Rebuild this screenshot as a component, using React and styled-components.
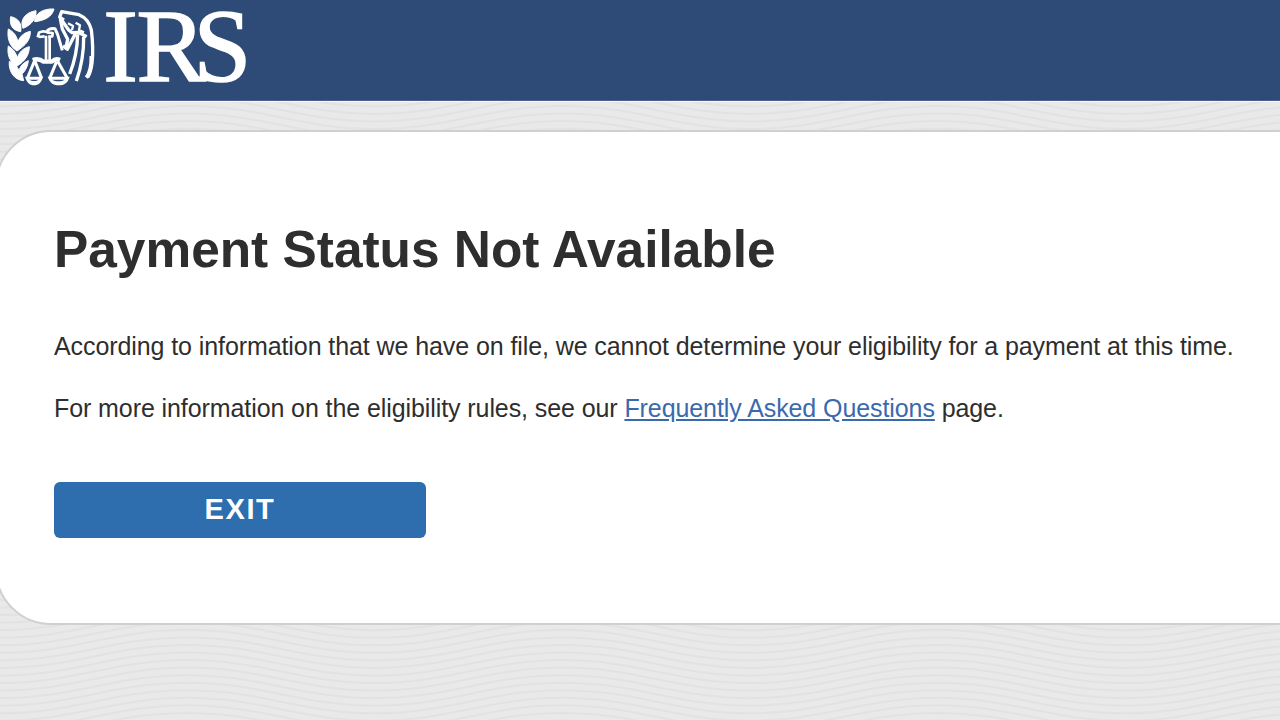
import React from "react";
import styled, { createGlobalStyle } from "styled-components";

const GlobalStyle = createGlobalStyle`
  *, *::before, *::after { box-sizing: border-box; }
  html, body { margin: 0; overflow: hidden; }
  body { font-family: "Liberation Sans", Arial, sans-serif; color: #2e2e2e; }
`;

const Page = styled.div`
  position: relative;
  display: flex;
  flex-direction: column;
  height: 720px;
  background: #e9e9e9;
  overflow: hidden;
`;

const WaveBackdrop = styled.svg`
  position: absolute;
  inset: 0;
  width: 100%;
  height: 100%;
`;

const Header = styled.header`
  position: relative;
  flex: none;
  height: 102px;
  background: #2d4b76;
  border-bottom: 1px solid #f8f8fa;
  box-shadow: inset 0 -1px 0 #4a5f8e;
`;

const Logo = styled.svg`
  display: block;
  width: 260px;
  height: 100px;
  overflow: visible;
`;

const Card = styled.main`
  position: relative;
  flex: none;
  height: 495px;
  margin: 28px -60px 0 -5px;
  padding: 87px 58px 0 57px;
  background: #fff;
  border: 2px solid #d0d0d0;
  border-radius: 56px;
`;

const Title = styled.h1`
  margin: 0;
  font-size: 51.4px;
  line-height: 60px;
  white-space: nowrap;
`;

const Copy = styled.p`
  margin: ${(p) => p.$top}px 0 0;
  font-size: 25px;
  line-height: 30px;
  letter-spacing: -0.088px;
  white-space: nowrap;
`;

const FaqLink = styled.a`
  color: #3a6aae;
  text-decoration: underline;
`;

const ExitButton = styled.button`
  display: block;
  width: 372px;
  height: 56px;
  margin: 59px 0 0;
  padding: 0 0 2px;
  border: 0;
  border-radius: 6px;
  background: #2e6dae;
  color: #fff;
  font: bold 29px/1 "Liberation Sans", Arial, sans-serif;
  letter-spacing: 1.6px;
`;

const WAVE_PERIOD = 375;
const WAVE_GAP = 7.55;

function wavePath(crest) {
  const low = crest + 23;
  const half = WAVE_PERIOD / 2;
  let d = `M0 ${low}`;
  for (let x = 0; x < 1280; x += WAVE_PERIOD) {
    d += `C${x + 75} ${low} ${x + half - 75} ${crest} ${x + half} ${crest}`;
    d += `S${x + WAVE_PERIOD - 75} ${low} ${x + WAVE_PERIOD} ${low}`;
  }
  return d;
}

const crestsFrom = (start, count) => Array.from({ length: count }, (_, i) => start + i * WAVE_GAP);

function Waves() {
  const crests = [...crestsFrom(75.8, 16), ...crestsFrom(561.9, 22)];
  return (
    <WaveBackdrop aria-hidden="true" fill="none" stroke="#e2e2e2" strokeWidth="2">
      {crests.map((y) => (
        <path key={y} d={wavePath(y)} />
      ))}
    </WaveBackdrop>
  );
}

function Emblem() {
  return (
    <g transform="scale(.33333)" fill="#fff">
      <g stroke="#fff" strokeWidth="3" strokeLinejoin="round">
        <path d="M104 65C104 40 130 25 162 27C157 49 135 62 104 65Z" />
        <path d="M69 85C58 61 76 37 108 32C110 54 95 75 69 85Z" />
        <path d="M62 95C36 91 28 74 32 50C55 54 67 72 62 95Z" />
        <path d="M51 153C27 138 21 112 25 87C43 97 50 108 54 126C59 110 70 99 91 94C92 119 77 136 51 153Z" />
        <path d="M50 199C27 184 21 162 25 138C39 146 47 157 52 173C58 156 69 145 88 140C88 166 74 184 50 199Z" />
        <path d="M71 242C42 240 25 214 28 184C43 190 52 199 57 212C60 200 69 188 85 182C84 199 75 214 66 222Z" />
      </g>
      <g fill="none" stroke="#fff" strokeWidth="8" strokeLinejoin="round">
        <path d="M113 112L117 98Q131 90 144 98L158 99L157 109L145 110M117 111L134 109" />
        <path d="M138 107V184M149 107V184" strokeWidth="8" />
        <path d="M141 94Q147 84 165 86L173 104L187 151" strokeWidth="9" />
        <path d="M98 180Q117 174 130 185H156Q166 174 180 180" strokeWidth="13" />
        <path d="M103 184L82 235M105 184L125 235M170 184L149 235M173 184L202 235" strokeWidth="9" />
      </g>
      <path d="M75 230H129C125 247 115 256 102 256S80 247 75 230ZM88 239C95 244 109 245 116 239Z" fillRule="evenodd" />
      <path d="M143 230H209C204 248 193 256 176 256S149 247 143 230ZM157 239C165 245 185 246 193 239Z" fillRule="evenodd" />
      <g fill="none" stroke="#fff" strokeWidth="10" strokeLinejoin="round">
        <path d="M192 60L179 51L185 35L237 44Q266 56 274 90Q281 145 276 190Q272 218 263 232" />
        <path d="M180 53L206 90L216 98L235 97L260 110" />
        <path d="M181 57L187 87L203 118L197 148" />
        <path d="M189 137L202 148L226 101" />
        <path d="M204 70L219 78L216 90M227 68L240 76L237 90L252 97" strokeWidth="7" />
        <path d="M233 103Q232 165 209 222" />
        <path d="M251 110Q252 177 229 243" />
        <path d="M274 168Q275 212 259 233" strokeWidth="11" />
      </g>
    </g>
  );
}

export default function App() {
  return (
    <Page>
      <GlobalStyle />
      <Waves />
      <Header>
        <Logo viewBox="0 0 260 100" role="img" aria-label="IRS">
          <Emblem />
          <text
            x="103.2 136.5 193.6"
            y="81"
            fill="#fff"
            stroke="#fff"
            strokeWidth="1.6"
            fontFamily="Liberation Serif, serif"
            fontSize="104"
          >
            IRS
          </text>
        </Logo>
      </Header>
      <Card>
        <Title>Payment Status Not Available</Title>
        <Copy $top={52}>According to information that we have on file, we cannot determine your eligibility for a payment at this time.</Copy>
        <Copy $top={32}>
          For more information on the eligibility rules, see our <FaqLink href="#faq">Frequently Asked Questions</FaqLink> page.
        </Copy>
        <ExitButton type="button">EXIT</ExitButton>
      </Card>
    </Page>
  );
}
